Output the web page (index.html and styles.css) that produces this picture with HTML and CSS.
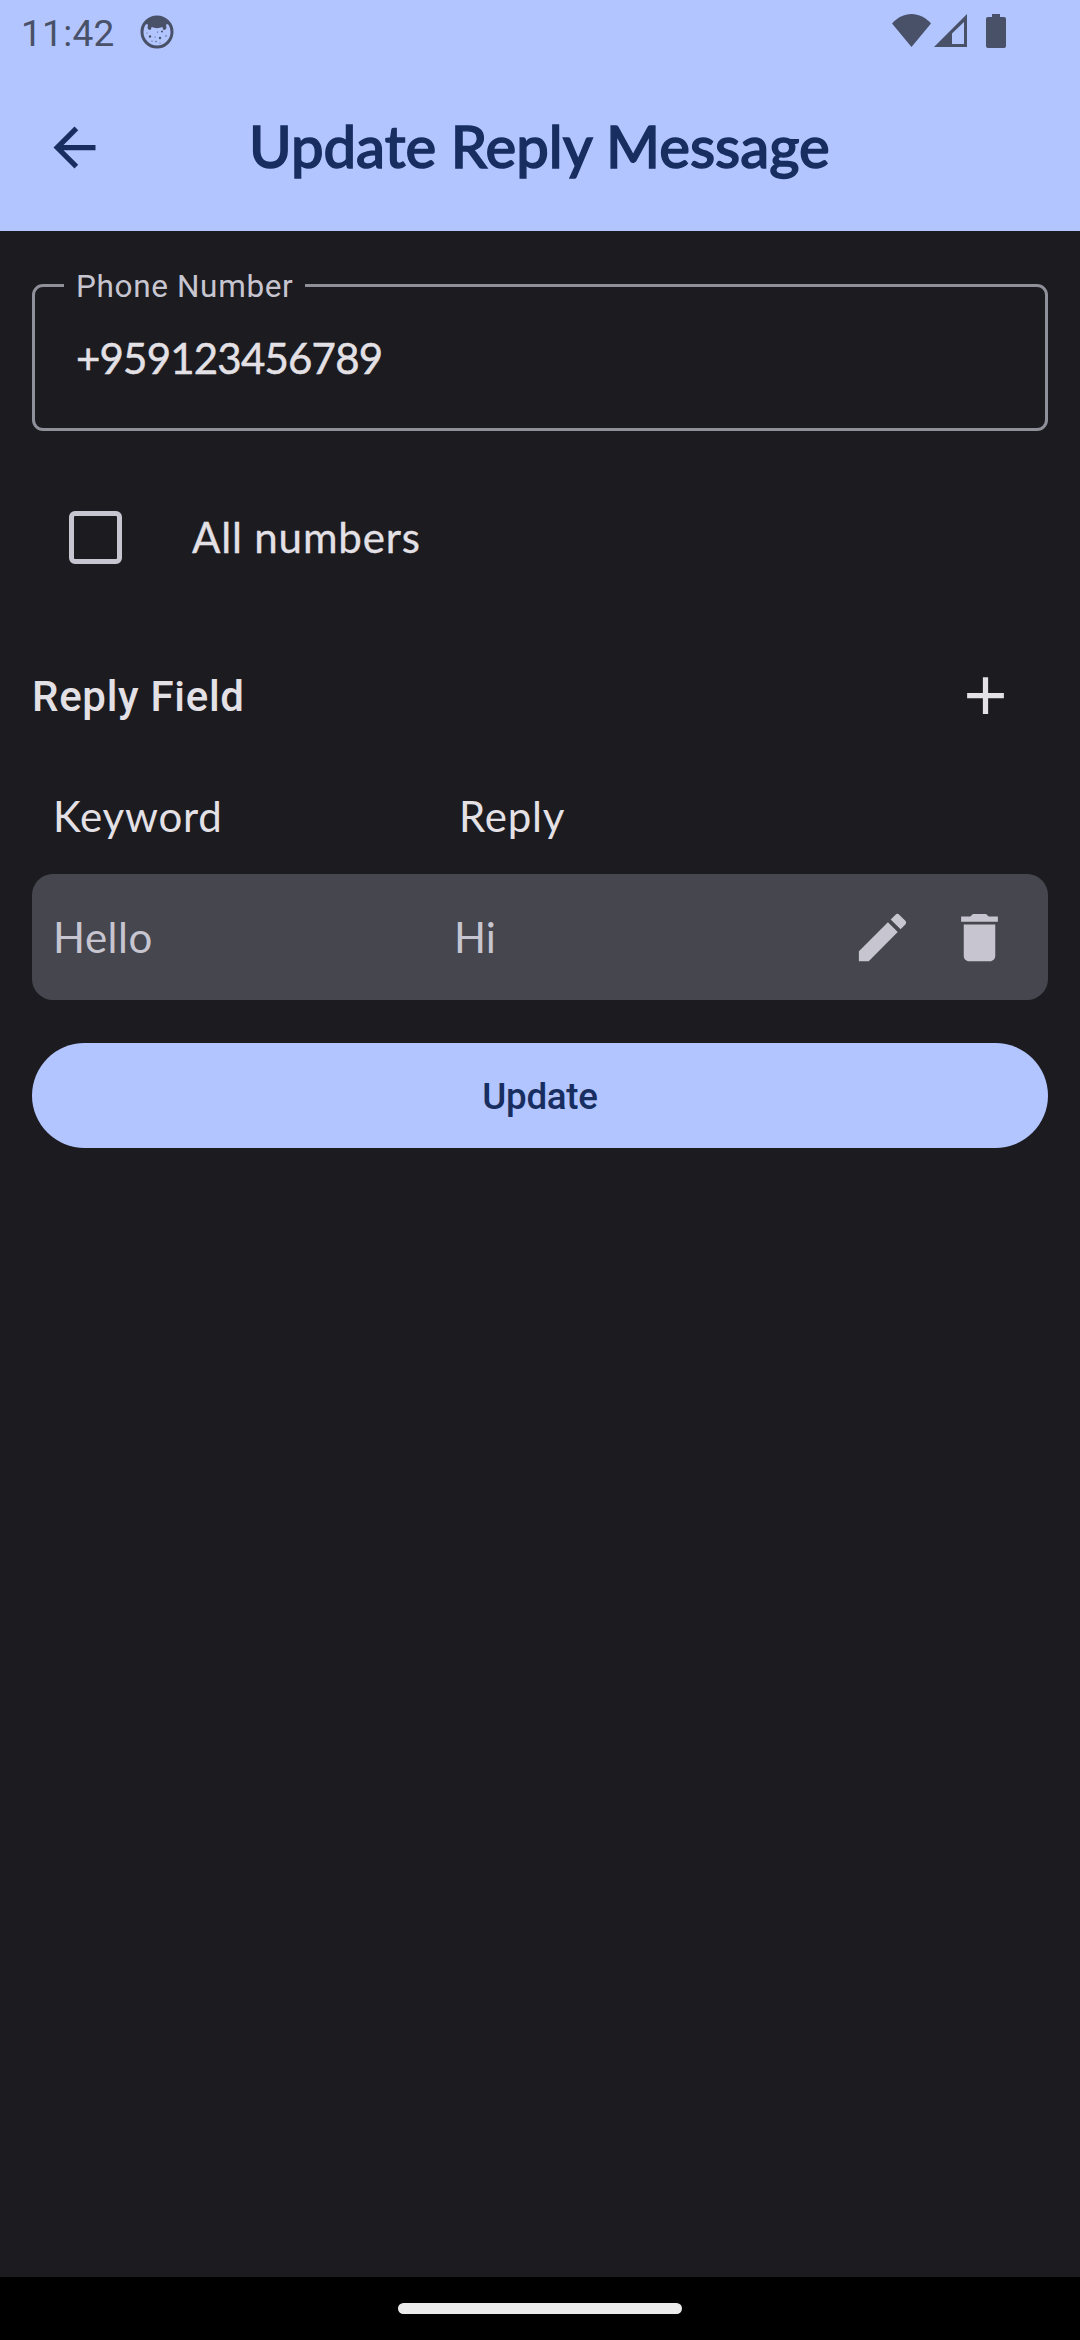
FILE: index.html
```html
<!DOCTYPE html>
<html lang="en">
<head>
<meta charset="utf-8">
<title>Update Reply Message</title>
<link rel="stylesheet" href="styles.css">
</head>
<body>
<div class="screen">
  <header class="top">
    <div class="status">
      <span class="clock">11:42</span>
      <svg class="face" viewBox="0 0 34 34"><circle cx="17" cy="17" r="15" fill="none" stroke="currentColor" stroke-width="3"/><path fill="currentColor" d="M5 9C8 3.500 12 1 17 1s9 2.500 12 8l-3 .5.500 3.500-1.500 2-2-.5-.5-2.500c-3.500 1.500-7.500 1.500-11 0l-.5 2.500-2 .5-1.500-2 .5-3.500z"/><g fill="currentColor"><circle cx="10" cy="21.500" r="1.200"/><circle cx="20" cy="23" r="1.200"/><circle cx="22" cy="16.500" r="1"/><circle cx="15" cy="22" r=".6"/><circle cx="17.500" cy="17" r=".6"/><circle cx="26" cy="21" r=".7"/><circle cx="12" cy="26" r=".6"/><circle cx="16" cy="26.500" r=".7"/><circle cx="20" cy="28" r=".5"/><circle cx="7" cy="18" r=".5"/></g></svg>
      <span class="grow"></span>
      <svg class="wifi" viewBox="0 0 39 33"><path fill="currentColor" d="M0 9.500C5.500 3.500 12 0 19.500 0S33.500 3.500 39 9.500L19.500 33z"/></svg>
      <svg class="signal" viewBox="0 0 33 33"><path fill="currentColor" fill-rule="evenodd" d="M33 0v33H0zM30 8L18 19.500V30h12z"/></svg>
      <svg class="battery" viewBox="0 0 20 34"><path fill="currentColor" d="M6 0h8v3h4a2 2 0 0 1 2 2v27a2 2 0 0 1-2 2H2a2 2 0 0 1-2-2V5a2 2 0 0 1 2-2h4z"/></svg>
    </div>
    <div class="appbar">
      <svg class="icon" viewBox="0 0 24 24"><path fill="currentColor" d="M20 11H7.830l5.590-5.590L12 4l-8 8 8 8 1.410-1.410L7.830 13H20v-2z"/></svg>
      <h1 class="title">Update Reply Message</h1>
    </div>
  </header>
  <main class="content">
    <fieldset class="field">
      <legend class="label">Phone Number</legend>
      <div class="value">+959123456789</div>
    </fieldset>
    <div class="check"><span class="box"></span><span class="check-text">All numbers</span></div>
    <div class="section">
      <h2 class="section-title">Reply Field</h2>
      <svg class="icon" viewBox="0 0 24 24"><path fill="currentColor" d="M19 13h-6v6h-2v-6H5v-2h6V5h2v6h6v2z"/></svg>
    </div>
    <div class="heads"><span class="keyword">Keyword</span><span class="reply">Reply</span></div>
    <div class="row">
      <span class="row-key">Hello</span><span class="row-reply">Hi</span>
      <svg class="icon" viewBox="0 0 24 24"><path fill="currentColor" d="M3 17.250V21h3.750L17.810 9.940l-3.750-3.750L3 17.250zM20.710 7.040c.39-.39.39-1.020 0-1.410l-2.340-2.340c-.39-.39-1.020-.39-1.410 0l-1.830 1.830 3.750 3.750 1.830-1.830z"/></svg>
      <svg class="icon" viewBox="0 0 24 24"><path fill="currentColor" d="M6 19c0 1.100.9 2 2 2h8c1.100 0 2-.9 2-2V7H6v12zM19 4h-3.500l-1-1h-5l-1 1H5v2h14V4z"/></svg>
    </div>
    <button class="update">Update</button>
  </main>
  <footer class="nav"><span class="pill"></span></footer>
</div>
</body>
</html>
```

FILE: styles.css
```css
* { box-sizing: border-box; }
body { margin: 0; }
h1, h2 { margin: 0; font-weight: 500; }
svg { display: block; flex: none; }
.screen {
  width: 1080px; height: 2340px; display: flex; flex-direction: column;
  background: #1b1b20; color: #e4e1e6;
  font: 400 42px/60px Lato, "Open Sans", sans-serif; white-space: nowrap;
  -webkit-text-stroke: 0;
}
.top { height: 231px; background: #b2c5ff; color: #182e60; }
.status { height: 63px; display: flex; align-items: flex-start; padding: 14px 74px 0 21px; color: #495169; }
.clock { font: 400 37px/40px Roboto, sans-serif; width: 119px; letter-spacing: 0.3px; }
.face { width: 34px; height: 34px; margin-top: 1px; }
.grow { flex: 1; }
.wifi { width: 39px; height: 33px; margin-right: 3px; }
.signal { width: 33px; height: 33px; margin-right: 19px; }
.battery { width: 20px; height: 34px; }
.icon { width: 63px; height: 63px; }
.appbar { height: 168px; display: flex; align-items: center; padding-left: 43px; }
.title { margin: 0 0 2px 143px; font-size: 58px; line-height: 80px; -webkit-text-stroke: 1.4px currentColor; }
.content { flex: 1; padding: 0 32px; display: flex; flex-direction: column; }
.field { height: 166px; margin: 34px 0 0; padding: 0 0 0 29px; border: 3px solid #90909a; border-radius: 11px; min-width: 0; }
.label { padding: 2px 12px 0 12px; height: 41px; font: 400 31.500px/40px Roboto, sans-serif; letter-spacing: 0.65px; color: #c7c5d0; }
.value { padding-left: 12px; margin-top: 22px; letter-spacing: -0.8px; -webkit-text-stroke: 0.5px currentColor; }
.check { height: 63px; margin-top: 75px; padding-left: 37px; display: flex; align-items: center; }
.box { width: 53px; height: 53px; border: 5px solid #c7c5d0; border-radius: 6px; }
.check-text { margin: 0 0 2px 70px; letter-spacing: 0.85px; -webkit-text-stroke: 0.3px currentColor; }
.section { height: 63px; margin-top: 95px; padding-right: 31px; display: flex; align-items: center; justify-content: space-between; }
.section-title { padding-top: 3px; font: 500 42px/60px Roboto, sans-serif; letter-spacing: 0.7px; }
.heads { margin-top: 59px; height: 60px; padding-left: 21px; display: flex; letter-spacing: 0.8px; }
.keyword { width: 406px; }
.row { height: 126px; margin-top: 28px; padding: 0 37px 0 21px; display: flex; align-items: center; gap: 34px; background: #46464f; color: #c7c5d0; border-radius: 21px; }
.row-key { width: 367px; letter-spacing: 0.5px; }
.row-reply { flex: 1; }
.update { height: 105px; margin-top: 43px; padding: 3px 0 0; border: 0; border-radius: 53px; background: #b2c5ff; color: #182e60; font: 500 36.750px/50px Roboto, sans-serif; letter-spacing: -0.3px; }
.nav { height: 63px; background: #000; display: flex; justify-content: center; padding-top: 26px; }
.pill { width: 284px; height: 11px; border-radius: 6px; background: #ebebeb; }
```
